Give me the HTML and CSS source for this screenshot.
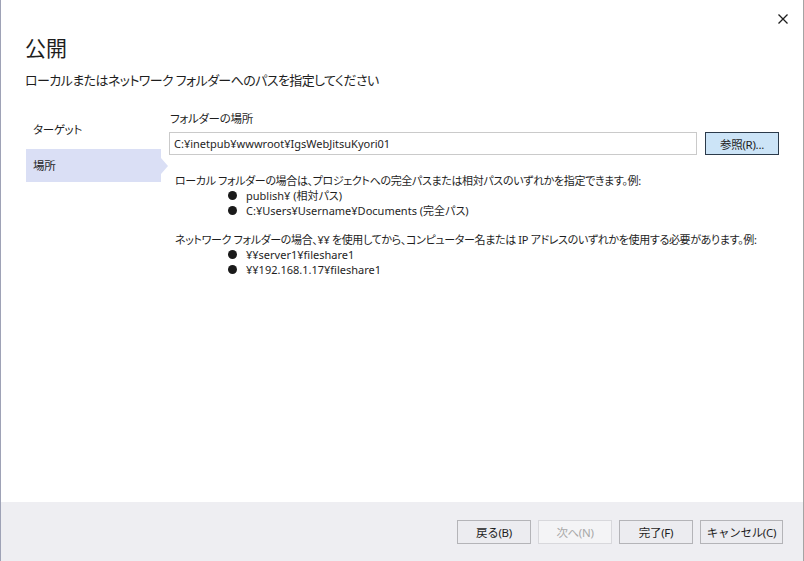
FILE: index.html
```html
<!DOCTYPE html>
<html lang="ja">
<head>
  <meta charset="UTF-8">
  <title>公開</title>
  <link rel="stylesheet" href="styles.css">
</head>
<body>
  <div class="dialog">
    <button class="close" aria-label="閉じる">
      <svg width="12" height="12" viewBox="0 0 12 12"><path d="M1.5 1.5L10.5 10.5M10.5 1.5L1.5 10.5" stroke="#1e1e1e" stroke-width="1.3"/></svg>
    </button>

    <div class="head">
      <h1>公開</h1>
      <p class="sub">ローカルまたはネットワーク フォルダーへのパスを指定してください</p>
    </div>

    <div class="main">
      <!-- 左側のステップ -->
      <ul class="steps">
        <li>ターゲット</li>
        <li class="active">場所</li>
      </ul>

      <div class="content">
        <label class="field-label" for="folder">フォルダーの場所</label>
        <div class="field-row">
          <input id="folder" type="text" value="C:¥inetpub¥wwwroot¥IgsWebJitsuKyori01">
          <button class="browse">参照(R)...</button>
        </div>

        <div class="help">
          <p>ローカル フォルダーの場合は、プロジェクトへの完全パスまたは相対パスのいずれかを指定できます。例:</p>
          <ul>
            <li>publish¥ (相対パス)</li>
            <li>C:¥Users¥Username¥Documents (完全パス)</li>
          </ul>
          <p>ネットワーク フォルダーの場合、¥¥ を使用してから、コンピューター名または IP アドレスのいずれかを使用する必要があります。例:</p>
          <ul>
            <li>¥¥server1¥fileshare1</li>
            <li>¥¥192.168.1.17¥fileshare1</li>
          </ul>
        </div>
      </div>
    </div>

    <div class="footer">
      <button>戻る(B)</button>
      <button disabled>次へ(N)</button>
      <button>完了(F)</button>
      <button class="wide">キャンセル(C)</button>
    </div>
  </div>
</body>
</html>
```

FILE: styles.css
```css
body {
  margin: 0;
  padding: 0;
  background-color: #ffffff;
  font-family: "Noto Sans", "Noto Sans CJK JP", sans-serif;
  font-feature-settings: "palt";
  color: #1e1e1e;
}

.dialog {
  position: relative;
  width: 802px;
  height: 561px;
  border-left: 1px solid #9ea2b6;
  border-right: 1px solid #a4a4a4;
  display: flex;
  flex-direction: column;
}

.close {
  position: absolute;
  top: 12px;
  right: 13px;
  width: 14px;
  height: 14px;
  padding: 0;
  border: none;
  background: none;
  display: flex;
  align-items: center;
  justify-content: center;
}

.head {
  padding: 34px 0 0 24px;
  height: 76px;
}

.head h1 {
  margin: 0;
  font-size: 21px;
  font-weight: normal;
  line-height: 28px;
}

.head .sub {
  margin: 8px 0 0;
  font-size: 13px;
  letter-spacing: -0.6px;
  line-height: 20px;
}

.main {
  flex: 1;
  display: flex;
  padding-left: 25px;
}

.steps {
  list-style: none;
  margin: 3px 0 0;
  padding: 0;
  width: 135px;
}

.steps li {
  position: relative;
  height: 33px;
  line-height: 33px;
  padding-left: 7px;
  font-size: 11.5px;
  letter-spacing: -0.3px;
  margin-bottom: 3px;
}

.steps li.active {
  background-color: #dadff5;
}

.steps li.active::after {
  content: "";
  position: absolute;
  right: -7px;
  top: 9px;
  border-left: 7px solid #dadff5;
  border-top: 8px solid transparent;
  border-bottom: 8px solid transparent;
}

.content {
  margin-left: 8px;
  width: 610px;
}

.field-label {
  display: block;
  font-size: 11.5px;
  letter-spacing: -0.3px;
  line-height: 16px;
  margin-top: 1px;
  padding-left: 1px;
}

.field-row {
  display: flex;
  gap: 8px;
  margin-top: 5px;
}

.field-row input {
  flex: 1;
  height: 23px;
  box-sizing: border-box;
  border: 1px solid #cacaca;
  padding: 0 4px;
  font-family: inherit;
  font-size: 11px;
  color: #1e1e1e;
  background: #ffffff;
  outline: none;
}

.browse {
  width: 74px;
  height: 23px;
  background-color: #cce4f7;
  border: 1px solid #2b3a4a;
  font-family: inherit;
  font-size: 11.5px;
  letter-spacing: -0.3px;
  color: #1e1e1e;
  padding: 0;
}

.help {
  margin-top: 18px;
  padding-left: 6px;
  font-size: 11px;
  letter-spacing: -0.35px;
  line-height: 15px;
}

.help p {
  margin: 0;
}

.help ul {
  list-style: none;
  margin: 0 0 14px;
  padding-left: 53px;
}

.help li {
  position: relative;
  padding-left: 18px;
  letter-spacing: 0;
}

.help li::before {
  content: "";
  position: absolute;
  left: 0;
  top: 3px;
  width: 9px;
  height: 9px;
  border-radius: 50%;
  background-color: #1a1a1a;
}

.footer {
  height: 59px;
  background-color: #eeeef2;
  display: flex;
  justify-content: flex-end;
  align-items: center;
  gap: 7px;
  padding-right: 20px;
}

.footer button {
  width: 74px;
  height: 24px;
  background-color: #ececf0;
  border: 1px solid #b4b4b8;
  font-family: inherit;
  font-size: 11.5px;
  letter-spacing: -0.3px;
  color: #1e1e1e;
  padding: 0;
}

.footer button:disabled {
  background-color: #f4f4f6;
  border-color: #d8d8dc;
  color: #a8a8a8;
}

.footer .wide {
  width: 83px;
}
```
